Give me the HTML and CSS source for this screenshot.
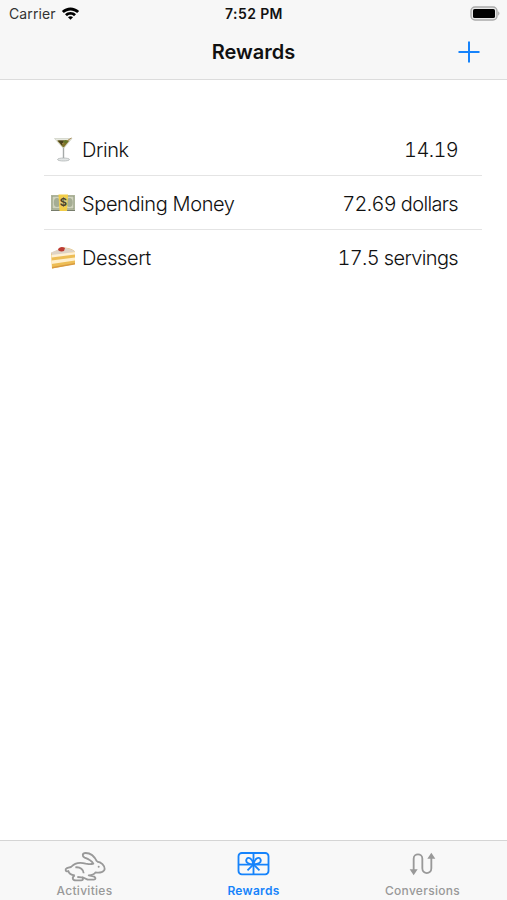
FILE: index.html
```html
<!DOCTYPE html>
<html lang="en">
<head>
  <meta charset="UTF-8" />
  <title>Rewards</title>
  <meta name="viewport" content="width=device-width, initial-scale=1.0" />
  <link rel="stylesheet" href="styles.css">
</head>
<body>

  <!-- Status bar and title -->
  <header>
    <div class="status-bar">
      <div class="carrier">
        <span>Carrier</span>
        <svg class="wifi" viewBox="0 0 18 14" width="19" height="15">
          <path d="M0.8 4.7C5.4 .2 12.6 .2 17.2 4.7L15.3 6.6C11.8 3.2 6.2 3.2 2.7 6.6Z" />
          <path d="M3.8 7.7C6.7 4.9 11.3 4.9 14.2 7.7L12.3 9.6C10.4 7.8 7.6 7.8 5.7 9.6Z" />
          <path d="M6.6 10.5C8 9.3 10 9.3 11.4 10.5L9 13Z" />
        </svg>
      </div>
      <div class="time">7:52 PM</div>
      <svg class="battery" viewBox="0 0 31 15" width="31" height="15">
        <rect x="1" y="1" width="26" height="13" rx="4" fill="#e8e8e8" stroke="#aaa" stroke-width="1.4" />
        <rect x="3" y="3" width="22" height="9" rx="1.6" fill="#000" />
        <path d="M28.3 5.3Q30.5 7.5 28.3 9.7Z" fill="#999" />
      </svg>
    </div>
    <div class="nav-bar">
      <h1>Rewards</h1>
      <button class="add" aria-label="Add">
        <svg viewBox="0 0 22 22" width="22" height="22">
          <path d="M11 .5V21.5M.5 11H21.5" />
        </svg>
      </button>
    </div>
  </header>

  <!-- Reward list -->
  <main>
    <ul class="rewards">
      <li>
        <svg class="emoji" viewBox="0 0 26 26" width="26" height="26">
          <path d="M4.5 2.5H22L14 12H13Z" fill="#e7e9df" stroke="#c4c8ba" stroke-width=".6" />
          <path d="M7 4.5H19.5L14 11.3H13Z" fill="#81752b" />
          <path d="M8 4.5H14L12 9.5Z" fill="#483e1c" />
          <path d="M12 8L21.5 2" stroke="#a98b52" stroke-width="1" />
          <ellipse cx="15.5" cy="5.5" rx="2.2" ry="1.6" fill="#637528" />
          <path d="M13.5 12V23" stroke="#a6aaa9" stroke-width="1.4" />
          <ellipse cx="13.5" cy="23.5" rx="6" ry="1.5" fill="#e2e5e5" stroke="#a8adad" stroke-width=".7" />
        </svg>
        <span class="name">Drink</span>
        <span class="amount">14.19</span>
      </li>
      <li>
        <svg class="emoji" viewBox="0 0 26 26" width="26" height="26">
          <rect x="1" y="5" width="24" height="15" fill="#b1b79e" />
          <rect x="2.2" y="6.2" width="21.6" height="12.6" fill="#d0d3bd" stroke="#929c82" stroke-width=".6" />
          <ellipse cx="7" cy="12.5" rx="3.2" ry="4.5" fill="#a5ad94" />
          <ellipse cx="19.5" cy="12.5" rx="3.2" ry="4.5" fill="#a5ad94" />
          <path d="M1 20.5H25" stroke="#777d6c" />
          <path d="M8.5 4.5H18L17 21H9.5Z" fill="#f2cd48" />
          <ellipse cx="13.2" cy="12" rx="3.6" ry="5" fill="#e5d282" />
          <text x="13.2" y="16">$</text>
        </svg>
        <span class="name">Spending Money</span>
        <span class="amount">72.69 dollars</span>
      </li>
      <li>
        <svg class="emoji" viewBox="0 0 26 26" width="26" height="26">
          <path d="M1 9L14 3.5Q23 4 25 8V20L2 24.5Z" fill="#edbd55" />
          <path d="M1 8.5L13 3.5Q22 4 25 8L2 12Z" fill="#dfd3c5" />
          <path d="M1.5 11L25 8V10.5L1.5 13.5Z" fill="#fff1d5" />
          <path d="M1.5 16.5L25 13.5V16.5L1.5 20Z" fill="#fff0ce" />
          <path d="M2 23L25 19V20.5L2 24.5Z" fill="#d89a40" />
          <path d="M8 5Q11 1.5 15 4L14 7Q11 8 8.5 6.5Z" fill="#bc3a31" />
        </svg>
        <span class="name">Dessert</span>
        <span class="amount">17.5 servings</span>
      </li>
    </ul>
  </main>

  <!-- Tabs -->
  <nav>
    <a href="#">
      <svg viewBox="72 47 126 93" width="42" height="31">
        <path d="M171 79C164 64 151 53 137 53C126 53 126 63 134 67C145 71 155 76 160 85C151 88 145 86 137 85C119 80 103 84 93 95C84 97 75 99 77 105C78 109 82 109 85 107C87 115 94 119 104 120" />
        <path d="M171 79C184 80 194 91 194 101C193 110 180 113 167 111C162 118 154 120 146 120L157 122C168 124 169 133 161 133H143L126 125" />
        <path d="M106 96C121 94 131 103 131 114M104 120C95 127 97 135 108 135H122C131 136 131 127 124 126L112 125" />
        <circle class="eye" cx="176" cy="94" r="3" />
      </svg>
      <span>Activities</span>
    </a>
    <a href="#" class="active">
      <svg viewBox="82 47 98 75" width="33" height="25">
        <rect x="86" y="53" width="90" height="64" rx="10" />
        <path d="M131 54V116M87 88H175" />
        <path d="M131 87C117 87 106 81 110 72C115 62 129 71 131 87C133 71 147 62 152 72C156 81 145 87 131 87L113 105M131 87L149 105" />
      </svg>
      <span>Rewards</span>
    </a>
    <a href="#">
      <svg viewBox="102 47 81 75" width="27" height="25">
        <path d="M116 107V70C116 53 142 53 142 70V99C142 118 169 118 169 99V62" />
        <path class="arrow" d="M104 102H128L116 120ZM157 70H181L169 52Z" />
      </svg>
      <span>Conversions</span>
    </a>
  </nav>

</body>
</html>
```
FILE: styles.css
```css
* {
  box-sizing: border-box;
}

body {
  margin: 0;
  height: 100vh;
  display: flex;
  flex-direction: column;
  background: white;
  color: #111;
  font-family: Inter, sans-serif;
}

header {
  height: 80px;
  background: #f7f7f7;
  border-bottom: 1px solid #dcdcdc;
}

.status-bar {
  display: grid;
  grid-template-columns: 1fr auto 1fr;
  align-items: center;
  height: 27px;
  padding: 0 6px 0 9px;
}

.carrier {
  display: flex;
  align-items: center;
  gap: 5px;
  font-size: 14px;
  letter-spacing: 0.1px;
  color: #333;
}

.wifi {
  fill: #000;
}

.time {
  margin-left: -2px;
  font-size: 14px;
  font-weight: 600;
  letter-spacing: 0.4px;
}

.battery {
  justify-self: end;
}

.nav-bar {
  display: grid;
  grid-template-columns: 1fr auto 1fr;
  align-items: center;
  height: 50px;
  padding: 0 27px;
}

h1 {
  grid-column: 2;
  margin: 0;
  font-size: 20px;
  font-weight: 600;
}

.add {
  justify-self: end;
  display: flex;
  padding: 0;
  border: none;
  background: none;
}

.add path {
  stroke: #1683fb;
  stroke-width: 2;
}

main {
  flex: 1;
  padding: 42px 25px 0 44px;
}

.rewards {
  margin: 0;
  padding: 0;
  list-style: none;
}

.rewards li {
  display: flex;
  align-items: center;
  height: 54px;
  padding: 0 24px 0 6px;
  border-bottom: 1px solid #e4e4e4;
  font-size: 20px;
  font-weight: 300;
  letter-spacing: -0.4px;
}

.rewards li:last-child {
  height: 53px;
  border-bottom: none;
}

.emoji {
  margin-right: 6px;
  fill: none;
}

.emoji text {
  fill: #4b4429;
  font-size: 11px;
  font-weight: bold;
  text-anchor: middle;
}

.name,
.amount {
  padding-top: 2px;
}

.name {
  flex: 1;
}

.amount {
  font-variant-numeric: tabular-nums;
  letter-spacing: -0.65px;
}

nav {
  display: grid;
  grid-template-columns: repeat(3, 1fr);
  height: 60px;
  background: #f8f8f8;
  border-top: 1px solid #d5d5d5;
}

nav a {
  display: flex;
  flex-direction: column;
  align-items: center;
  justify-content: space-between;
  padding: 10px 0 1px;
  color: #999;
  font-size: 12px;
  font-weight: 500;
  line-height: 16px;
  letter-spacing: 0.3px;
  text-decoration: none;
}

nav svg {
  fill: none;
  stroke: currentColor;
  stroke-width: 5.5;
  stroke-linejoin: round;
}

nav .eye,
nav .arrow {
  fill: currentColor;
  stroke: none;
}

nav .active {
  color: #1683fb;
  font-weight: 600;
}
```
